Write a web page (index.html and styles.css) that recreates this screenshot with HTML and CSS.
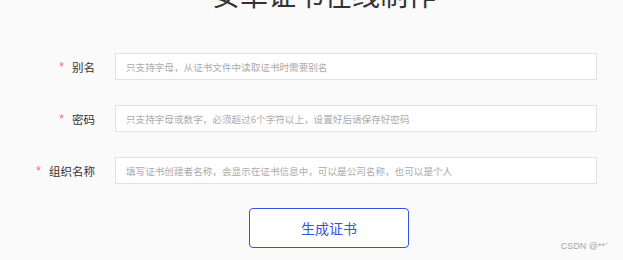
FILE: index.html
```html
<!DOCTYPE html>
<html lang="zh-CN">
<head>
<meta charset="utf-8">
<title>安卓证书在线制作</title>
<link rel="stylesheet" href="styles.css">
</head>
<body>
<div class="page">
  <h1 class="title">安卓证书在线制作</h1>
  <form class="form">
    <div class="row">
      <label class="label"><span class="star">*</span>别名</label>
      <input class="field" type="text" placeholder="只支持字母，从证书文件中读取证书时需要别名">
    </div>
    <div class="row">
      <label class="label"><span class="star">*</span>密码</label>
      <input class="field" type="text" placeholder="只支持字母或数字，必须超过6个字符以上，设置好后请保存好密码">
    </div>
    <div class="row">
      <label class="label"><span class="star">*</span>组织名称</label>
      <input class="field" type="text" placeholder="填写证书创建者名称，会显示在证书信息中，可以是公司名称，也可以是个人">
    </div>
    <div class="actions">
      <button class="btn" type="button">生成证书</button>
    </div>
  </form>
  <div class="watermark">CSDN @**ˉ</div>
</div>
</body>
</html>
```
FILE: styles.css
```css
html, body {
  margin: 0;
  padding: 0;
  background: #fafafa;
  height: 100%;
  overflow: hidden;
}
.page {
  font-family: "Noto Sans CJK SC", "Noto Sans", sans-serif;
  color: #333;
  height: 260px;
}
.title {
  margin: -20px 0 0 25px;
  font-size: 28px;
  line-height: 28px;
  font-weight: 400;
  text-align: center;
  color: #333;
}
.form {
  margin-top: 45px;
  display: flex;
  flex-direction: column;
  gap: 25px;
}
.row {
  display: flex;
  align-items: center;
  gap: 20px;
}
.label {
  width: 95px;
  display: flex;
  justify-content: flex-end;
  align-items: center;
  font-size: 11.5px;
  color: #333;
}
.star {
  color: #f56c6c;
  margin-right: 8px;
  font-family: "Liberation Sans", sans-serif;
  font-size: 12px;
}
.field {
  box-sizing: border-box;
  width: 482px;
  height: 27px;
  margin: 0;
  padding: 0 10px;
  border: 1px solid #e2e2e2;
  background: #fff;
  font-family: "Noto Sans CJK SC", "Noto Sans", sans-serif;
  font-size: 9.6px;
  color: #333;
  outline: none;
}
.field::placeholder {
  color: #ababab;
}
.actions {
  margin-top: -1px;
  padding-left: 249px;
}
.btn {
  box-sizing: border-box;
  width: 160px;
  height: 40px;
  border: 1px solid #3452e1;
  border-radius: 4px;
  background: #fff;
  color: #3a50e0;
  font-family: "Noto Sans CJK SC", "Noto Sans", sans-serif;
  font-size: 14px;
  padding: 0;
}
.watermark {
  position: absolute;
  right: 15px;
  top: 241px;
  font-family: "Liberation Sans", sans-serif;
  font-size: 9px;
  color: #a8a8a8;
}
```
